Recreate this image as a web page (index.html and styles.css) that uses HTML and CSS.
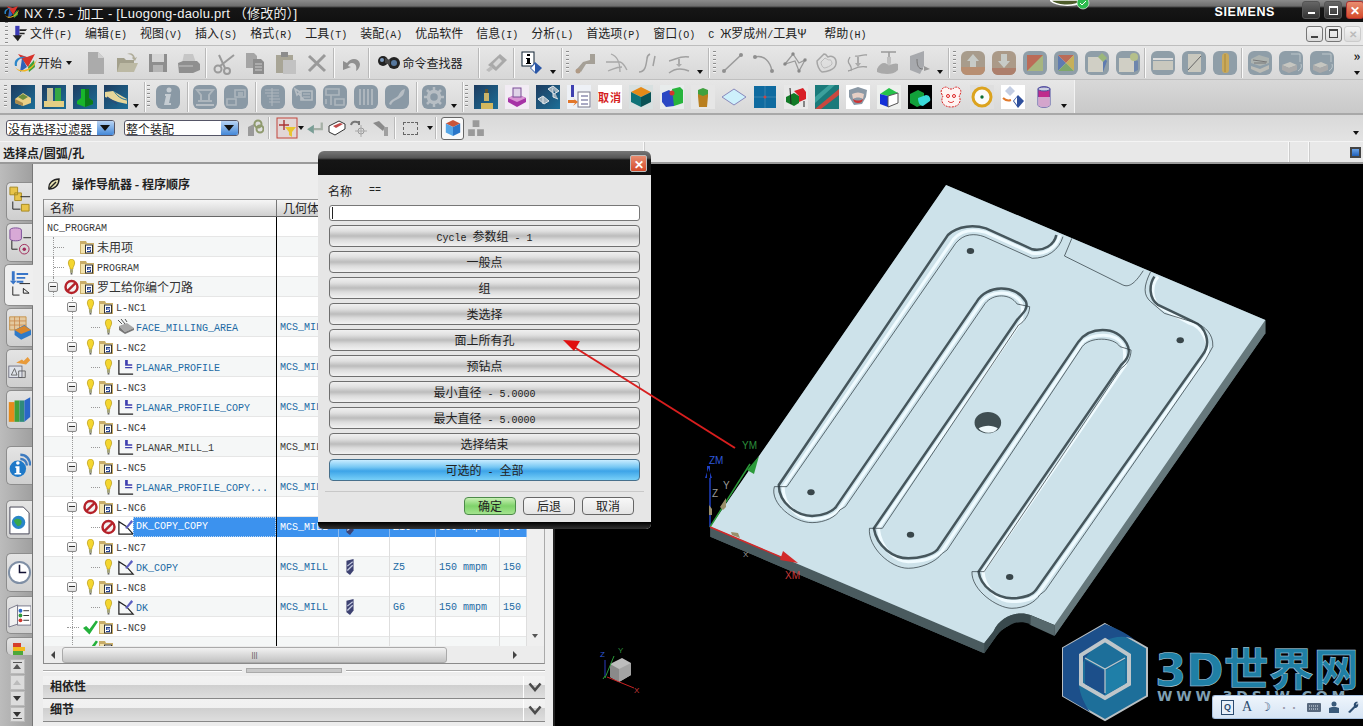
FILE: index.html
```html
<!DOCTYPE html>
<html lang="zh">
<head>
<meta charset="utf-8">
<title>NX 7.5</title>
<link rel="stylesheet" href="styles.css">
</head>
<body>
<svg class="sprite" aria-hidden="true">
<defs>
<linearGradient id="gBlue" x1="0" y1="0" x2="1" y2="1"><stop offset="0" stop-color="#1d3c60"/><stop offset="1" stop-color="#1c6f98"/></linearGradient>
</defs>
<symbol id="nx" viewBox="0 0 24 24"><path d="M4 3l9 3 8-3-7 13z" fill="#d8332a"/><path d="M8 7l5 9-7 5z" fill="#2f62b8"/><path d="M14 16l6-7 1 7-6 5z" fill="#3da23a"/><path d="M1 16c5 6 16 4 22-8-3 12-17 17-22 8z" fill="#f2b51d"/><path d="M1 15C-1 8 6 5 12 6 7 7 2 9 3 15z" fill="#2b86c8"/></symbol>
<symbol id="new" viewBox="0 0 24 24"><path d="M4 1h10l6 6v16H4z" fill="#ababab"/><path d="M14 1l6 6h-6z" fill="#d0d0d0"/></symbol>
<symbol id="open" viewBox="0 0 24 24"><path d="M2 7h7l2 2h8v12H2z" fill="#a3a08c"/><path d="M5 12h18l-4 9H2z" fill="#bcb9a4"/><path d="M12 3c4-2 7 0 8 4l2-1-2 4-3-3 1-1c-1-2-3-3-6-3z" fill="#b0ad9a"/></symbol>
<symbol id="save" viewBox="0 0 24 24"><rect x="3" y="3" width="18" height="18" fill="#8e8e8e"/><rect x="6" y="3" width="12" height="8" fill="#d5d5d5"/><rect x="7" y="14" width="10" height="7" fill="#b5b5b5"/></symbol>
<symbol id="print" viewBox="0 0 24 24"><path d="M7 3h9l3 9H5z" fill="#c6c6c6"/><path d="M1 12l5-2h14l3 3v6l-7 3H2z" fill="#8f8f8f"/><path d="M2 14h14v2H2z" fill="#aaa"/></symbol>
<symbol id="cut" viewBox="0 0 24 24"><g fill="none" stroke="#9a9a9a" stroke-width="2"><circle cx="6" cy="18" r="3.5"/><circle cx="15" cy="20" r="3"/><path d="M8 15L22 4M13 17L7 4"/></g></symbol>
<symbol id="copy" viewBox="0 0 24 24"><path d="M3 2h8l3 3v12H3z" fill="#a5a5a5"/><path d="M10 8h8l3 3v12H10z" fill="#8d8d8d"/><path d="M12 13h7M12 16h7M12 19h7" stroke="#ccc"/></symbol>
<symbol id="paste" viewBox="0 0 24 24"><rect x="2" y="4" width="17" height="18" fill="#a8a596"/><rect x="7" y="1" width="7" height="5" fill="#8c8c8c"/><rect x="9" y="9" width="13" height="14" fill="#c2c2c2"/></symbol>
<symbol id="del" viewBox="0 0 24 24"><path d="M4 5l16 15M20 4L4 20" stroke="#9a9a9a" stroke-width="3"/></symbol>
<symbol id="undo" viewBox="0 0 24 24"><path d="M7 12c4-6 12-5 13 1 0 3-2 6-4 7 1-4 0-8-4-8-2 0-3 1-4 3l3 1-8 3 0-9z" fill="#909090"/></symbol>
<symbol id="bino" viewBox="0 0 24 24"><circle cx="7" cy="10" r="5" fill="#222"/><circle cx="18" cy="12" r="6" fill="#222"/><circle cx="18" cy="12" r="3" fill="#56779d"/><circle cx="6" cy="9" r="2" fill="#7d9abc"/><path d="M9 7l5 2v5l-5-2z" fill="#444"/></symbol>
<symbol id="gem" viewBox="0 0 24 24"><path d="M3 14L15 3l7 6-11 11z" fill="#a9a9a9"/><path d="M8 13l6-6 3 3-6 6z" fill="#d8d8d8"/><path d="M1 19l5-4 2 3-4 3z" fill="#bbb"/></symbol>
<symbol id="info" viewBox="0 0 24 24"><rect x="2" y="1" width="12" height="14" fill="#fff" stroke="#123"/><path d="M7 3h3v2H7zM6 7h4v5h1v1H6v-1h1V8H6z" fill="#000"/><path d="M15 11l7 6-6 6-6-6z" fill="#2a56a6"/><path d="M15 13v8l-4-4z" fill="#fff"/></symbol>
<symbol id="c1" viewBox="0 0 24 24"><path d="M3 18l6-7 7-2V3h5v10h-9l-5 8z" fill="#a5a097"/><circle cx="4" cy="20" r="2.5" fill="#b09a85"/></symbol>
<symbol id="c2" viewBox="0 0 24 24"><path d="M1 11h14c4 1 5 5 7 8M6 3c6 2 9 7 9 18M3 20c6-2 8-4 14-4" fill="none" stroke="#a8a8a8" stroke-width="1.3"/></symbol>
<symbol id="c3" viewBox="0 0 24 24"><path d="M3 21c6 0 7-6 8-13 0-3 1-4 3-5M17 15l2-10" fill="none" stroke="#a0a0a0" stroke-width="1.5"/></symbol>
<symbol id="c4" viewBox="0 0 24 24"><path d="M2 10c6-1 12-6 20-4M2 22c6-5 13-5 20-2" fill="none" stroke="#a0a0a0" stroke-width="1.5"/><path d="M11 8v5h-2l3 3 3-3h-2V8z" fill="#aaa"/></symbol>
<symbol id="l1" viewBox="0 0 24 24"><path d="M3 20L20 4" stroke="#9a9a9a" stroke-width="1.5"/><circle cx="3" cy="20" r="2" fill="#8f8f8f"/><circle cx="20" cy="4" r="2" fill="#8f8f8f"/></symbol>
<symbol id="l2" viewBox="0 0 24 24"><path d="M3 6c9-2 15 4 17 14" fill="none" stroke="#9a9a9a" stroke-width="1.5"/><circle cx="3" cy="6" r="2" fill="#8f8f8f"/><circle cx="20" cy="20" r="2" fill="#8f8f8f"/></symbol>
<symbol id="l3" viewBox="0 0 24 24"><path d="M2 13L10 3l6 9 6-3-6 11-4-10L2 13z" fill="none" stroke="#9a9a9a" stroke-width="1.3"/><circle cx="10" cy="3" r="1.7" fill="#888"/><circle cx="2" cy="13" r="1.7" fill="#888"/><circle cx="16" cy="20" r="1.7" fill="#888"/><circle cx="22" cy="9" r="1.7" fill="#888"/></symbol>
<symbol id="l4" viewBox="0 0 24 24"><path d="M3 10l7-7c3 0 3 3 4 3 3-2 9 0 8 7-1 6-10 8-14 8-3-2-5-7-5-11z" fill="none" stroke="#a5a5a5" stroke-width="1.5"/><path d="M7 11l4-4c2 1 3 2 4 2 2-1 3 2 3 4-1 2-6 4-8 4-2-1-3-4-3-6z" fill="none" stroke="#bbb"/></symbol>
<symbol id="l5" viewBox="0 0 24 24"><path d="M5 6c-5 8 3 6 1 14M3 20c6-1 9-6 19-4M10 5c3 1 8-2 12-1" fill="none" stroke="#9f9f9f" stroke-width="1.3"/><path d="M12 6v6h-2l3 4 3-4h-2V6z" fill="#aaa"/></symbol>
<symbol id="l6" viewBox="0 0 24 24"><path d="M5 1h15M13 1v8" stroke="#999" stroke-width="1.5"/><path d="M1 18c3-6 7-7 10-5 4 2 8-2 11 0v6c-6 6-16 4-21 2z" fill="#a9a9a9"/><path d="M11 6h4v6l-2 3-2-3z" fill="#c0c0c0"/></symbol>
<symbol id="l7" viewBox="0 0 24 24"><path d="M3 5l14-5v15l-4 8-10-4z" fill="#a7a9ad"/><path d="M10 8c0 6 1 10 6 10" fill="none" stroke="#777"/><path d="M17 15l6 3-6 2z" fill="#999"/></symbol>
<symbol id="ra" viewBox="0 0 24 24"><rect width="24" height="24" rx="6" fill="#a89c8c"/><path d="M12 3l6 7h-3v6H9v-6H6z" fill="#c7cbc7"/><path d="M0 16h24v2c0 3-3 6-6 6H6c-3 0-6-3-6-6z" fill="#b88f72"/></symbol>
<symbol id="rb" viewBox="0 0 24 24"><rect width="24" height="24" rx="6" fill="#ab9a88"/><path d="M9 3h6v7h3l-6 7-6-7h3z" fill="#c7cbc7"/><path d="M0 17h24v1c0 3-3 6-6 6H6c-3 0-6-3-6-6z" fill="#ad7f6c"/></symbol>
<symbol id="rc" viewBox="0 0 24 24"><rect width="24" height="24" rx="6" fill="#8f9ea8"/><rect x="4" y="4" width="16" height="16" fill="#a7b57f"/><path d="M4 4h16L4 20z" fill="#bb6b57"/></symbol>
<symbol id="rd" viewBox="0 0 24 24"><rect width="24" height="24" rx="6" fill="#8f9ea8"/><rect x="4" y="4" width="16" height="16" fill="#ccc"/><path d="M4 4l8 8-8 8z" fill="#5f7bb0"/><path d="M4 4h16l-8 8z" fill="#bb6b57"/><path d="M20 4v16l-8-8z" fill="#c7b05a"/><path d="M4 20h16l-8-8z" fill="#7fa76c"/></symbol>
<symbol id="re" viewBox="0 0 24 24"><rect width="24" height="24" rx="6" fill="#8f9ea8"/><rect x="3" y="6" width="15" height="15" fill="#d0cfc5"/><path d="M18 6l4 4-4 11z" fill="#5f7bb0"/><path d="M13 6l4-4 5 5-4 4z" fill="#9bb77b"/></symbol>
<symbol id="rf" viewBox="0 0 24 24"><rect width="24" height="24" rx="6" fill="#8f9ea8"/><rect x="3" y="7" width="15" height="14" fill="#d0cfc5"/><path d="M18 8l4 2v9l-4 2z" fill="#6e86ad"/><circle cx="18" cy="6" r="4" fill="#b5c08a"/></symbol>
<symbol id="rg" viewBox="0 0 24 24"><rect width="24" height="24" rx="6" fill="#8f9ea8"/><path d="M2 10h20v9H2z" fill="#c9c8be"/><path d="M2 7h20v2H2z" fill="#dcdcdc"/></symbol>
<symbol id="rh" viewBox="0 0 24 24"><rect width="24" height="24" rx="6" fill="#8f9ea8"/><path d="M6 3h13v18H6z" fill="#c9c8be"/><path d="M6 19L19 5" stroke="#666"/></symbol>
<symbol id="ri" viewBox="0 0 24 24"><rect width="24" height="24" rx="6" fill="#8f9ea8"/><rect x="9" y="2" width="7" height="20" rx="3.5" fill="#c9a95b"/><path d="M12 3v18" stroke="#a88738"/></symbol>
<symbol id="rj" viewBox="0 0 24 24"><rect width="24" height="24" rx="6" fill="#8f9ea8"/><path d="M3 8l8-4 10 3v5l-9 3-9-3z" fill="#adb3b0"/><path d="M3 15l9 3 9-4v4l-9 4-9-4z" fill="#bcbcb6"/><path d="M5 9l14 2M6 12l12 0" stroke="#777"/></symbol>
<symbol id="rk" viewBox="0 0 24 24"><rect width="24" height="24" rx="6" fill="#8f9ea8"/><path d="M3 14l8-3 7 3-8 3z" fill="#c6c6c0"/><path d="M3 14v5l7 3v-5zM18 14v5l-8 3v-5z" fill="#aaa"/><path d="M12 3h9v8M19 20c3-2 4-4 3-7" fill="none" stroke="#bcc6ca"/></symbol>
<symbol id="s1" viewBox="0 0 24 24"><rect width="24" height="24" rx="6" fill="#8a99a5"/><path d="M5 16h14M8 16v-6l-4-5h16l-4 5v6" fill="none" stroke="#adb6bd" stroke-width="2"/><path d="M3 20h18" stroke="#b7bec4" stroke-width="2"/></symbol>
<symbol id="s2" viewBox="0 0 24 24"><rect width="24" height="24" rx="6" fill="#8a99a5"/><path d="M3 14h9v6H3zM11 5h10v7H11zM14 8h5M14 10h5" fill="none" stroke="#adb6bd" stroke-width="1.6"/></symbol>
<symbol id="s3" viewBox="0 0 24 24"><rect width="24" height="24" rx="6" fill="#8a99a5"/><path d="M4 5h14M4 8h14M6 11h12M8 14h11M8 17h11M11 3v18" stroke="#adb6bd" stroke-width="1.2"/></symbol>
<symbol id="s4" viewBox="0 0 24 24"><rect width="24" height="24" rx="6" fill="#8a99a5"/><path d="M3 4l5 3-3 3zM7 9l5 6M9 6h11v9H9z" fill="none" stroke="#b7bec4" stroke-width="1.6"/><path d="M11 9h7M11 12h7" stroke="#b7bec4"/></symbol>
<symbol id="s5" viewBox="0 0 24 24"><rect width="24" height="24" rx="6" fill="#8a99a5"/><path d="M3 4h13v6H3zM8 10v10M12 14h9v6h-9zM3 14v5" fill="none" stroke="#adb6bd" stroke-width="1.6"/></symbol>
<symbol id="s6" viewBox="0 0 24 24"><rect width="24" height="24" rx="6" fill="#8a99a5"/><path d="M6 4v16M10 4v16M14 4v16M18 4v16" stroke="#adb6bd" stroke-width="2"/></symbol>
<symbol id="s7" viewBox="0 0 24 24"><rect width="24" height="24" rx="6" fill="#8a99a5"/><path d="M4 19c2-5 6-5 9-8 2-3 3-6 7-7-1 4-1 6-4 8-3 3-8 3-10 8z" fill="#b7bec4"/></symbol>
<symbol id="s8" viewBox="0 0 24 24"><rect width="24" height="24" rx="6" fill="#8a99a5"/><circle cx="12" cy="12" r="5.5" fill="none" stroke="#b7bec4" stroke-width="3.5"/><path d="M12 2v4M12 18v4M2 12h4M18 12h4M5 5l3 3M16 16l3 3M19 5l-3 3M8 16l-3 3" stroke="#b7bec4" stroke-width="2.5"/></symbol>
<symbol id="inf" viewBox="0 0 24 24"><rect width="24" height="24" rx="6" fill="#8a99a5"/><circle cx="13" cy="5" r="2.5" fill="#c5ccd2"/><path d="M9 9h6l-2 9h2v2H8l2-9H9z" fill="#c5ccd2"/></symbol>
<symbol id="t1" viewBox="0 0 24 24"><rect width="24" height="24" fill="url(#gBlue)"/><path d="M4 14l8-6 8 5v5l-8 3-8-3z" fill="#e9cf86"/><path d="M7 12l5-3 5 3-5 3z" fill="#6b8e3d"/><path d="M4 14l8 4v3l-8-3z" fill="#a98b4d"/></symbol>
<symbol id="t2" viewBox="0 0 24 24"><rect width="24" height="24" fill="url(#gBlue)"/><rect x="5" y="3" width="6" height="13" fill="#c8c29c"/><rect x="13" y="3" width="6" height="13" fill="#36a843"/><path d="M2 16h20v6H2z" fill="#e4cf84"/></symbol>
<symbol id="t3" viewBox="0 0 24 24"><rect width="24" height="24" fill="url(#gBlue)"/><path d="M8 4h8v9l4 3v3l-8 3-8-3v-3l4-3z" fill="#18b52b"/><path d="M12 4h4v9l4 3v3l-8 3z" fill="#0a7a18"/></symbol>
<symbol id="t4" viewBox="0 0 24 24"><rect width="24" height="24" fill="url(#gBlue)"/><path d="M1 7l8-1 14 8v5l-9-2-13-5z" fill="#e6d69a"/><path d="M3 12l10 7" stroke="#2b4d77" stroke-width="1.5"/><path d="M10 6c3 5 7 8 13 9" stroke="#1c6f98" fill="none"/></symbol>
<symbol id="t5" viewBox="0 0 24 24"><rect width="24" height="24" fill="url(#gBlue)"/><path d="M10 8h5v8h-5z" fill="#c9b46a"/><path d="M7 18h12v6H7z" fill="#d3b85e"/><path d="M11 4h3v4h-3z" fill="#5d5230"/></symbol>
<symbol id="t6" viewBox="0 0 24 24"><rect width="24" height="24" fill="#f2ecf4"/><path d="M3 13l9-4 9 4v4l-9 5-9-5z" fill="#a632a6"/><path d="M12 9l9 4-9 4-9-4z" fill="#d995d4"/><rect x="8" y="3" width="8" height="9" fill="#dfd3e8" stroke="#7a4d96"/></symbol>
<symbol id="t7" viewBox="0 0 24 24"><rect width="24" height="24" fill="url(#gBlue)"/><path d="M12 4l5-3 6 5-5 3zM2 14l5-3 6 5-5 3zM17 3v9l5 2M7 12v7" fill="#9fb0bc" stroke="#dfe6ea"/></symbol>
<symbol id="t8" viewBox="0 0 24 24"><rect width="24" height="24" fill="#eef1f6"/><path d="M4 0h3v12H4z" fill="#3e3fb0"/><rect x="11" y="7" width="12" height="15" fill="#fff" stroke="#778"/><path d="M14 11h7M14 15h7M14 19h7" stroke="#558"/><path d="M1 15h7l-2-2 5 4-5 4 2-3H1z" fill="#e2762a"/></symbol>
<symbol id="t10" viewBox="0 0 24 24"><rect width="24" height="24" fill="#d8e0e0"/><path d="M2 7l10-5 10 5-10 5z" fill="#e58a18"/><path d="M2 7l10 5v10L2 17z" fill="#0f7378"/><path d="M22 7l-10 5v10l10-5z" fill="#0a5255"/></symbol>
<symbol id="t11" viewBox="0 0 24 24"><rect width="24" height="24" fill="#e8ecec"/><path d="M2 8l7-3 5 4v12l-8 1-4-5z" fill="#2a48c4"/><path d="M12 4l8-2 3 3v13l-9 3z" fill="#27b43c"/><circle cx="12" cy="8" r="2.5" fill="#d3352c"/></symbol>
<symbol id="t12" viewBox="0 0 24 24"><rect width="24" height="24" fill="#e6e6e6"/><path d="M7 7h10v4l-1 11H8L7 11z" fill="#b97f1f"/><path d="M7 5l5-2 5 2v4l-5 2-5-2z" fill="#3fa13f"/></symbol>
<symbol id="t13" viewBox="0 0 24 24"><path d="M12 4l12 8-12 8L0 12z" fill="#cdf0fb" stroke="#88b"/></symbol>
<symbol id="t14" viewBox="0 0 24 24"><rect x="1" y="1" width="22" height="22" fill="#0f6ba0"/><path d="M12 1v22M1 12h22" stroke="#3a84ae"/><circle cx="12" cy="12" r="1.5" fill="#c44"/></symbol>
<symbol id="t15" viewBox="0 0 24 24"><rect width="24" height="24" fill="#e8e8e8"/><path d="M2 12l8-4 5 3v7l-5 3-8-4z" fill="#127a27"/><path d="M10 6l9-3 3 4v7l-7 3v-6z" fill="#d81f26"/><path d="M6 3l1 16M20 16v6" stroke="#222"/></symbol>
<symbol id="t16" viewBox="0 0 24 24"><rect width="24" height="24" fill="#1a7a7a"/><path d="M0 24L24 4v6L6 24z" fill="#c9483f"/><path d="M0 12L14 0h6L0 18z" fill="#3ba09c"/></symbol>
<symbol id="t17" viewBox="0 0 24 24"><rect width="24" height="24" fill="#fff"/><path d="M3 5l9-3 9 3-1 7-4 7-8 1-5-8z" fill="#8a98a5"/><path d="M6 9c4-2 8-2 12 0l-1 5c-3-2-7-2-10 0z" fill="#e6cfc5"/><path d="M7 14c3 2 7 2 10 0-1 3-2 4-5 4s-4-1-5-4z" fill="#c33"/></symbol>
<symbol id="t18" viewBox="0 0 24 24"><rect width="24" height="24" fill="#eef0ee"/><path d="M3 9l9-6 9 5-10 3z" fill="#24c24a"/><path d="M3 9l8 2v11l-8-3z" fill="#1330d8"/><path d="M11 11l10-3v10l-10 4z" fill="#fff" stroke="#555"/></symbol>
<symbol id="t19" viewBox="0 0 24 24"><rect width="24" height="24" fill="#000"/><path d="M2 9l8-4 6 3v11l-7 3-7-4z" fill="#12a03a"/><path d="M10 13l8-3c3 0 5 3 4 6l-7 5c-3 0-5-3-5-8z" fill="#3ad9d9"/></symbol>
<symbol id="t20" viewBox="0 0 24 24"><path d="M3 4c3-3 6-2 7 0h4c1-2 4-3 7 0 2 3 0 6-1 7 3 5 0 11-8 11S1 16 4 11C3 10 1 7 3 4z" fill="#fff4f2" stroke="#d92a2a" stroke-dasharray="2 1"/><circle cx="9" cy="11" r="1.5" fill="none" stroke="#d22"/><circle cx="15" cy="11" r="1.5" fill="none" stroke="#d22"/><path d="M9 16c2 2 4 2 6 0" fill="none" stroke="#d22"/></symbol>
<symbol id="t21" viewBox="0 0 24 24"><rect width="24" height="24" fill="#dfdfdf"/><circle cx="12" cy="12" r="9" fill="#fafafa" stroke="#dca31e" stroke-width="3"/><circle cx="12" cy="12" r="1.7" fill="#0c6c32"/></symbol>
<symbol id="t22" viewBox="0 0 24 24"><rect width="24" height="24" fill="#fff"/><path d="M9 1l5 5-5 5-5-5z" fill="#c3cde2"/><path d="M17 10l6 6-6 7-5-7z" fill="#2e4f9c"/><path d="M16 12v8l-3-4z" fill="#fff"/><path d="M2 13c2 2 5 3 8 2" stroke="#e27a2b" stroke-width="2" fill="none"/></symbol>
<symbol id="t23" viewBox="0 0 24 24"><path d="M6 4c0-3 12-3 12 0v16c0 3-12 3-12 0z" fill="#c02c8c" stroke="#4d4da0"/><ellipse cx="12" cy="4" rx="6" ry="2" fill="#cdd0e0" stroke="#4d4da0"/><path d="M6 12h12v8c0 3-12 3-12 0z" fill="#d8c4dc" opacity=".8"/></symbol>
<symbol id="bulb" viewBox="0 0 12 18"><path d="M2.500 4.500c0-6 7-6 7 0 0 3-2 4-2 7h-3c0-3-2-4-2-7z" fill="#f4d630" stroke="#b99a10" stroke-width=".8"/><rect x="4.300" y="11.500" width="3.400" height="4" fill="#a5a57a"/><path d="M5 15.500h2v2H5z" fill="#666"/></symbol>
<symbol id="stop" viewBox="0 0 16 16"><circle cx="8" cy="8" r="6.4" fill="#f2f2f2" stroke="#b5222a" stroke-width="2.6"/><path d="M3.5 12.5l9-9" stroke="#b5222a" stroke-width="2.6"/></symbol>
<symbol id="check" viewBox="0 0 14 14"><path d="M0 8l3-2 3 3 6-8 2 1-8 12z" fill="#24b13b"/></symbol>
<symbol id="folder" viewBox="0 0 14 14"><path d="M0 1h6l1 2h7v11H0z" fill="#c9ad68"/><path d="M1 4h12v9H1z" fill="#f3e3ae"/><rect x="5.500" y="5" width="7" height="8" fill="#fff" stroke="#333"/><path d="M7 7h4v1.500H7.800v1H11V12H7v-1h3V10H7z" fill="#1f3d8f"/></symbol>
<symbol id="iface" viewBox="0 0 18 16"><path d="M2 7l6 6 9-4-7-5z" fill="#a8a8a8"/><path d="M1 1l4 4M4 0l4 5M8 0l2 3" stroke="#555"/><path d="M2 7v4l6 4 9-4V9l-9 4z" fill="#777"/></symbol>
<symbol id="iplan" viewBox="0 0 18 18"><path d="M1 1v16h16" fill="none" stroke="#222" stroke-width="1.4"/><path d="M8 1h3v5h5v1.500h-8zM8 9h8v1.500H8z" fill="#3f3fb0"/></symbol>
<symbol id="idk" viewBox="0 0 18 18"><path d="M1 3v14h16L9 8z" fill="none" stroke="#222" stroke-width="1.4"/><path d="M8 10L15 1l2 2-7 8z" fill="#5c5fc0"/></symbol>
<symbol id="tool" viewBox="0 0 10 18"><path d="M1 2l8-2v13l-4 5-4-3z" fill="#3d4272"/><path d="M2 8l6-5M2 13l6-6" stroke="#c5cbe0" stroke-width="1.4"/></symbol>
<symbol id="tab1" viewBox="0 0 24 34"><path d="M2 2h8v8H2zM7 8h7v8H7z" fill="#e8c44a" stroke="#a78a20"/><path d="M5 17v8h8M13 12h10" fill="none" stroke="#222"/><path d="M14 20h8v7h-8z" fill="#e8c44a" stroke="#a78a20"/></symbol>
<symbol id="tab2" viewBox="0 0 24 34"><path d="M2 4c0-3 12-3 12 0v9c0 3-12 3-12 0z" fill="#d8a9d6" stroke="#7a4d96"/><path d="M4 15v9h6M16 12h8" fill="none" stroke="#222"/><circle cx="17" cy="24" r="5" fill="none" stroke="#a02a5a"/><circle cx="17" cy="24" r="1.800" fill="#a02a5a"/></symbol>
<symbol id="tab3" viewBox="0 0 24 34"><path d="M4 2h3v10H4zM9 4h12v2H9zM9 8h9v2H9zM9 12h7v2H9z" fill="#3875c8"/><path d="M2 12h7l-3.500 4z" fill="#3875c8"/><path d="M5 18v9h7M12 15h11M16 25v-5l6 5z" fill="none" stroke="#222"/></symbol>
<symbol id="tab4" viewBox="0 0 28 34"><path d="M2 4h20v16H2z" fill="#e4c9a0" stroke="#c28a3a"/><path d="M2 9h20M2 14h20M8 4v16M14 4v16" stroke="#c8884a"/><path d="M8 20l12-6 8 6v6l-12 6-8-6z" fill="#2f7ac8"/><path d="M8 20l12-5 8 5-12 5z" fill="#d9872d"/></symbol>
<symbol id="tab5" viewBox="0 0 28 34"><rect x="1" y="14" width="16" height="14" fill="#dfe3ea" stroke="#667"/><path d="M4 25l4-8 3 8zM13 20h8v8h-8z" fill="none" stroke="#555"/><path d="M10 10l7-4 2 2 5-5 3 4-5 5z" fill="#e89a3a"/></symbol>
<symbol id="tab6" viewBox="0 0 28 34"><rect x="1" y="8" width="7" height="24" fill="#e68a1a"/><rect x="8" y="6" width="6" height="26" fill="#3ea03a"/><rect x="14" y="6" width="6" height="26" fill="#2f8a7a"/><path d="M20 6l7-4v24l-7 6z" fill="#2a66c8"/></symbol>
<symbol id="tab7" viewBox="0 0 28 34"><circle cx="12" cy="21" r="10" fill="#1f79c8"/><circle cx="12" cy="14" r="2.200" fill="#fff"/><path d="M9 18h5v8h2v2H8v-2h2v-6H9z" fill="#fff"/><path d="M15 4c7 0 12 5 12 13M15 9c4 0 8 3 8 8" fill="none" stroke="#3e7bc0" stroke-width="3"/></symbol>
<symbol id="tab8" viewBox="0 0 24 34"><path d="M2 4h14l6 6v22H2z" fill="#fff" stroke="#445"/><circle cx="11" cy="20" r="7" fill="#2a86c8"/><path d="M6 18c3-3 6-2 8 0 1 3-1 6-4 6-1-2-3-3-4-6z" fill="#39a84a"/></symbol>
<symbol id="tab9" viewBox="0 0 24 26"><circle cx="12" cy="13" r="11" fill="#fff" stroke="#7f8fa5" stroke-width="2"/><path d="M12 5v8h7" fill="none" stroke="#113" stroke-width="1.600"/></symbol>
<symbol id="tab10" viewBox="0 0 24 24"><path d="M1 5l9-4v20l-9 3z" fill="#f2f2f2" stroke="#778"/><rect x="10" y="2" width="14" height="20" fill="#fff" stroke="#778"/><circle cx="13" cy="7" r="2" fill="#2f69c8"/><circle cx="13" cy="12" r="2" fill="#2d9a3a"/><circle cx="13" cy="17" r="2" fill="#d0352c"/><path d="M16 7h6M16 12h6M16 17h6" stroke="#333"/></symbol>
<symbol id="tab11" viewBox="0 0 14 12"><path d="M0 0h8v4H0z" fill="#d53e2a"/><path d="M0 4h12v4H0z" fill="#f2b91f"/><path d="M0 8h10v4H0z" fill="#4da83a"/></symbol>
<symbol id="navi" viewBox="0 0 12 12"><path d="M1 11C0 5 5 1 11 1c0 6-4 10-10 10z" fill="#e9e2b0" stroke="#222" stroke-width="1.400"/><path d="M1 11L8 4" stroke="#222" stroke-width="1.400"/></symbol>
<symbol id="funnel" viewBox="0 0 22 22"><rect x="1" y="1" width="20" height="20" fill="#e2d6d6" stroke="#c2453a"/><path d="M3 8h10M8 3v10" stroke="#a33" stroke-width="1.400"/><path d="M9 10h11l-4 5v5l-3-2v-3z" fill="#e8c530"/></symbol>
<symbol id="retn" viewBox="0 0 16 16"><path d="M14 3v6H7" fill="none" stroke="#a6b0a6" stroke-width="2"/><path d="M7 5v8L1 9z" fill="#7a9e96"/></symbol>
<symbol id="box" viewBox="0 0 18 16"><path d="M1 6l10-5 6 3v5L7 15l-6-3z" fill="#fff" stroke="#333"/><path d="M5 6l7-3 3 1-7 4z" fill="#c04a4a"/></symbol>
<symbol id="pcs" viewBox="0 0 18 18"><path d="M1 6c1-4 5-4 8-2M9 2v4" fill="none" stroke="#777" stroke-width="2"/><circle cx="11" cy="12" r="3" fill="none" stroke="#999"/><path d="M11 6v12M5 12h12" stroke="#aaa"/></symbol>
<symbol id="pcs2" viewBox="0 0 18 18"><path d="M1 4l6-2 6 6-2 4z" fill="#8a8a8a"/><rect x="12" y="8" width="4" height="9" fill="#a0a0a0"/></symbol>
<symbol id="chain" viewBox="0 0 18 18"><path d="M2 8l6-3v12H2z" fill="#9a9a9a"/><circle cx="12" cy="5" r="3.500" fill="none" stroke="#8f9a6e" stroke-width="2"/><circle cx="14" cy="10" r="3.500" fill="none" stroke="#8f9a6e" stroke-width="2"/></symbol>
<symbol id="cube" viewBox="0 0 20 20"><path d="M2 5l8-4 8 4-8 4z" fill="#c8553a"/><path d="M2 5l8 4v10l-8-4z" fill="#56a6e6"/><path d="M18 5l-8 4v10l8-4z" fill="#2a76c8"/></symbol>
<symbol id="cube2" viewBox="0 0 16 16"><path d="M5 1h6v6H5zM1 9h6v6H1zM9 9h6v6H9z" fill="#9a9a9a"/></symbol>
<symbol id="chev" viewBox="0 0 14 10"><path d="M1.500 1.500L7 8l5.500-6.500" fill="none" stroke="#4c4c4c" stroke-width="2.600"/></symbol>
</svg>

<div class="app">
  <header class="title">
    <svg class="titleicon"><use href="#nx"/></svg>
    <span class="titletext">NX 7.5 - 加工 - [Luogong-daolu.prt （修改的）]</span>
    <span class="brand">SIEMENS</span>
    <span class="wbtns">
      <button class="wb"><span class="wmin"></span></button>
      <button class="wb"><span class="wmax"></span></button>
      <button class="wb wclose">✕</button>
    </span>
  </header>

  <nav class="menu">
    <i class="grip menugrip"></i>
    <svg class="menulogo" viewBox="0 0 20 20"><path d="M5 1h5v12H5z" fill="#3b3bb5"/><path d="M2 12h11l-5 7z" fill="#222"/><path d="M10 5h9l-2 2h-7zM10 9h6v2h-6z" fill="#222"/></svg>
    <span class="mi first">文件<span class="k">(F)</span></span><span class="mi">编辑<span class="k">(E)</span></span><span class="mi">视图<span class="k">(V)</span></span><span class="mi">插入<span class="k">(S)</span></span><span class="mi">格式<span class="k">(R)</span></span><span class="mi">工具<span class="k">(T)</span></span><span class="mi">装配<span class="k">(A)</span></span><span class="mi">优品软件</span><span class="mi">信息<span class="k">(I)</span></span><span class="mi">分析<span class="k">(L)</span></span><span class="mi">首选项<span class="k">(P)</span></span><span class="mi">窗口<span class="k">(O)</span></span><span class="mi cu"><span class="k">C </span>Ж罗成州<span class="k">/</span>工具Ψ</span><span class="mi">帮助<span class="k">(H)</span></span>
    <span class="innerbtns"><button class="ib"><span class="imin"></span></button><button class="ib"><span class="imax"></span></button><button class="ib dim">✕</button></span>
  </nav>

  <div class="tb tb1">
    <i class="grip"></i>
    <span class="startbtn"><svg class="starticon"><use href="#nx"/></svg><span>开始</span><i class="caret"></i></span>
    <svg class="i"><use href="#new"/></svg><svg class="i"><use href="#open"/></svg><svg class="i"><use href="#save"/></svg><svg class="i"><use href="#print"/></svg><i class="sep"></i>
    <svg class="i"><use href="#cut"/></svg><svg class="i"><use href="#copy"/></svg><svg class="i"><use href="#paste"/></svg><svg class="i"><use href="#del"/></svg><i class="sep"></i>
    <svg class="i"><use href="#undo"/></svg><i class="sep"></i>
    <span class="finder"><svg class="i"><use href="#bino"/></svg><span>命令查找器</span></span><i class="sep"></i>
    <svg class="i"><use href="#gem"/></svg><i class="sep"></i>
    <svg class="i"><use href="#info"/></svg><i class="dd"></i><i class="sep"></i><i class="grip"></i>
    <svg class="i"><use href="#c1"/></svg><svg class="i"><use href="#c2"/></svg><svg class="i"><use href="#c3"/></svg><svg class="i"><use href="#c4"/></svg><i class="dd"></i><i class="sep"></i><i class="grip"></i>
    <svg class="i"><use href="#l1"/></svg><svg class="i"><use href="#l2"/></svg><svg class="i"><use href="#l3"/></svg><svg class="i"><use href="#l4"/></svg><svg class="i"><use href="#l5"/></svg><svg class="i"><use href="#l6"/></svg><svg class="i"><use href="#l7"/></svg><i class="dd"></i><i class="sep"></i><i class="grip"></i>
    <svg class="i"><use href="#ra"/></svg><svg class="i"><use href="#rb"/></svg><svg class="i"><use href="#rc"/></svg><svg class="i"><use href="#rd"/></svg><svg class="i"><use href="#re"/></svg><svg class="i"><use href="#rf"/></svg><i class="sep"></i>
    <svg class="i"><use href="#rg"/></svg><svg class="i"><use href="#rh"/></svg><svg class="i"><use href="#ri"/></svg><i class="sep"></i>
    <svg class="i"><use href="#rj"/></svg><svg class="i"><use href="#rk"/></svg><svg class="i"><use href="#rk"/></svg>
    <span class="tbmore"><b>»</b><i class="caret"></i></span>
  </div>

  <div class="tb tb2">
    <span class="tb2main">
    <i class="grip gfirst"></i>
    <svg class="i"><use href="#t1"/></svg><svg class="i"><use href="#t2"/></svg><svg class="i"><use href="#t3"/></svg><svg class="i"><use href="#t4"/></svg><i class="dd"></i><i class="sep"></i><i class="grip"></i>
    <svg class="i"><use href="#inf"/></svg><i class="sep"></i>
    <svg class="i"><use href="#s1"/></svg><svg class="i"><use href="#s2"/></svg><i class="sep"></i>
    <svg class="i"><use href="#s3"/></svg><svg class="i"><use href="#s4"/></svg><svg class="i"><use href="#s5"/></svg><svg class="i"><use href="#s6"/></svg><svg class="i"><use href="#s7"/></svg><i class="sep"></i>
    <svg class="i"><use href="#s8"/></svg><i class="dd"></i><i class="sep"></i><i class="grip"></i>
    <svg class="i"><use href="#t5"/></svg><svg class="i"><use href="#t6"/></svg><svg class="i"><use href="#t7"/></svg><svg class="i"><use href="#t8"/></svg>
    <svg class="i" viewBox="0 0 24 24"><rect width="24" height="24" fill="#fff"/><text x="0" y="17" class="redt">取</text><text x="12" y="17" class="redt">消</text></svg>
    <svg class="i"><use href="#t10"/></svg><svg class="i"><use href="#t11"/></svg><svg class="i"><use href="#t12"/></svg><svg class="i"><use href="#t13"/></svg><svg class="i"><use href="#t14"/></svg><svg class="i"><use href="#t15"/></svg><svg class="i"><use href="#t16"/></svg><svg class="i"><use href="#t17"/></svg><svg class="i"><use href="#t18"/></svg><svg class="i"><use href="#t19"/></svg><svg class="i"><use href="#t20"/></svg><svg class="i"><use href="#t21"/></svg><svg class="i"><use href="#t22"/></svg><svg class="i"><use href="#t23"/></svg><i class="dd"></i>
    </span>
  </div>

  <div class="selbar">
    <span class="combo c1"><span class="ctext">没有选择过滤器</span><i class="carrow"></i></span>
    <span class="combo c2"><span class="ctext">整个装配</span><i class="carrow"></i></span>
    <svg class="si chain"><use href="#chain"/></svg><i class="sep"></i>
    <svg class="si funnel"><use href="#funnel"/></svg><i class="caret"></i>
    <svg class="si"><use href="#retn"/></svg>
    <svg class="si"><use href="#box"/></svg>
    <svg class="si"><use href="#pcs"/></svg>
    <svg class="si"><use href="#pcs2"/></svg><i class="sep"></i>
    <span class="dashrect"></span><i class="caret"></i><i class="sep"></i>
    <span class="cubebtn"><svg class="si"><use href="#cube"/></svg></span>
    <svg class="si"><use href="#cube2"/></svg>
    <i class="caret selcaret"></i>
  </div>

  <div class="cue">
    <span class="cuetext">选择点/圆弧/孔</span>
    <span class="cuecell c-a"></span><span class="cuecell c-b"></span><span class="cuecell c-c"></span>
    <span class="cueicon"></span>
  </div>

  <main class="main">
    <aside class="tabs">
      <div class="tab"><svg><use href="#tab1"/></svg></div>
      <div class="tab"><svg><use href="#tab2"/></svg></div>
      <div class="tab active"><svg><use href="#tab3"/></svg></div>
      <div class="tab"><svg><use href="#tab4"/></svg></div>
      <div class="tab"><svg><use href="#tab5"/></svg></div>
      <div class="tab"><svg><use href="#tab6"/></svg></div>
      <div class="tab gap"><svg><use href="#tab7"/></svg></div>
      <div class="tab gap2"><svg><use href="#tab8"/></svg></div>
      <div class="tab gap3"><svg><use href="#tab9"/></svg></div>
      <div class="tab t10"><svg><use href="#tab10"/></svg></div>
      <div class="tab t11"><svg><use href="#tab11"/></svg></div>
      <div class="tabscroll"><span class="tu bar"></span><span class="tu dimt"></span><span class="td"></span><span class="td bar"></span></div>
    </aside>

    <section class="panel">
      <div class="panelhead"><svg class="navi"><use href="#navi"/></svg><span>操作导航器 - 程序顺序</span></div>
      <div class="tree">
        <div class="thead"><span class="th th1">名称</span><span class="th">几何体</span></div>
        <div class="tbody">
          <div class="tlines">
            <div class="row"><div class="nm n0 nt"><span class="mono dark">NC_PROGRAM</span></div><div class="g"></div><div class="g"></div><div class="g"></div><div class="g"></div><div class="g"></div></div>
            <div class="row alt"><div class="nm n0"><i class="stub"></i><span class="st"></span><svg class="fo"><use href="#folder"/></svg><span class="cjk">未用项</span></div><div class="g"></div><div class="g"></div><div class="g"></div><div class="g"></div><div class="g"></div></div>
            <div class="row"><div class="nm n0"><i class="stub"></i><svg class="st"><use href="#bulb"/></svg><svg class="fo"><use href="#folder"/></svg><span class="mono dark">PROGRAM</span></div><div class="g"></div><div class="g"></div><div class="g"></div><div class="g"></div><div class="g"></div></div>
            <div class="row alt"><div class="nm n0"><i class="exp"></i><svg class="st"><use href="#stop"/></svg><svg class="fo"><use href="#folder"/></svg><span class="cjk">罗工给你编个刀路</span></div><div class="g"></div><div class="g"></div><div class="g"></div><div class="g"></div><div class="g"></div></div>

            <div class="row"><div class="nm n1"><i class="exp"></i><svg class="st"><use href="#bulb"/></svg><svg class="fo"><use href="#folder"/></svg><span class="mono dark">L-NC1</span></div><div class="g"></div><div class="g"></div><div class="g"></div><div class="g"></div><div class="g"></div></div>
            <div class="row alt"><div class="nm n2"><i class="stub s2"></i><svg class="st"><use href="#bulb"/></svg><svg class="op"><use href="#iface"/></svg><span class="mono">FACE_MILLING_AREA</span></div><div class="g mono">MCS_MILL</div><div class="g"></div><div class="g"></div><div class="g"></div><div class="g"></div></div>
            <div class="row"><div class="nm n1"><i class="exp"></i><svg class="st"><use href="#bulb"/></svg><svg class="fo"><use href="#folder"/></svg><span class="mono dark">L-NC2</span></div><div class="g"></div><div class="g"></div><div class="g"></div><div class="g"></div><div class="g"></div></div>
            <div class="row alt"><div class="nm n2"><i class="stub s2"></i><svg class="st"><use href="#bulb"/></svg><svg class="op"><use href="#iplan"/></svg><span class="mono">PLANAR_PROFILE</span></div><div class="g mono">MCS_MILL</div><div class="g"></div><div class="g"></div><div class="g"></div><div class="g"></div></div>
            <div class="row"><div class="nm n1"><i class="exp"></i><svg class="st"><use href="#bulb"/></svg><svg class="fo"><use href="#folder"/></svg><span class="mono dark">L-NC3</span></div><div class="g"></div><div class="g"></div><div class="g"></div><div class="g"></div><div class="g"></div></div>
            <div class="row alt"><div class="nm n2"><i class="stub s2"></i><svg class="st"><use href="#bulb"/></svg><svg class="op"><use href="#iplan"/></svg><span class="mono">PLANAR_PROFILE_COPY</span></div><div class="g mono">MCS_MILL</div><div class="g"></div><div class="g"></div><div class="g"></div><div class="g"></div></div>
            <div class="row"><div class="nm n1"><i class="exp"></i><svg class="st"><use href="#bulb"/></svg><svg class="fo"><use href="#folder"/></svg><span class="mono dark">L-NC4</span></div><div class="g"></div><div class="g"></div><div class="g"></div><div class="g"></div><div class="g"></div></div>
            <div class="row alt"><div class="nm n2"><i class="stub s2"></i><svg class="st"><use href="#bulb"/></svg><svg class="op"><use href="#iplan"/></svg><span class="mono dark">PLANAR_MILL_1</span></div><div class="g mono dark">MCS_MILL</div><div class="g"></div><div class="g"></div><div class="g"></div><div class="g"></div></div>
            <div class="row"><div class="nm n1"><i class="exp"></i><svg class="st"><use href="#bulb"/></svg><svg class="fo"><use href="#folder"/></svg><span class="mono dark">L-NC5</span></div><div class="g"></div><div class="g"></div><div class="g"></div><div class="g"></div><div class="g"></div></div>
            <div class="row alt"><div class="nm n2"><i class="stub s2"></i><svg class="st"><use href="#bulb"/></svg><svg class="op"><use href="#iplan"/></svg><span class="mono">PLANAR_PROFILE_COPY...</span></div><div class="g mono">MCS_MILL</div><div class="g"></div><div class="g"></div><div class="g"></div><div class="g"></div></div>
            <div class="row"><div class="nm n1"><i class="exp"></i><svg class="st"><use href="#stop"/></svg><svg class="fo"><use href="#folder"/></svg><span class="mono dark">L-NC6</span></div><div class="g"></div><div class="g"></div><div class="g"></div><div class="g"></div><div class="g"></div></div>
            <div class="row alt sel"><div class="nm n2"><i class="stub s2"></i><svg class="st"><use href="#stop"/></svg><svg class="op"><use href="#idk"/></svg><span class="mono seltext">DK_COPY_COPY</span></div><div class="g mono">MCS_MILL</div><div class="g"><svg class="tool"><use href="#tool"/></svg></div><div class="g mono">Z10</div><div class="g mono">150 mmpm</div><div class="g mono">150</div></div>
            <div class="row"><div class="nm n1"><i class="exp"></i><svg class="st"><use href="#bulb"/></svg><svg class="fo"><use href="#folder"/></svg><span class="mono dark">L-NC7</span></div><div class="g"></div><div class="g"></div><div class="g"></div><div class="g"></div><div class="g"></div></div>
            <div class="row alt"><div class="nm n2"><i class="stub s2"></i><svg class="st"><use href="#bulb"/></svg><svg class="op"><use href="#idk"/></svg><span class="mono">DK_COPY</span></div><div class="g mono">MCS_MILL</div><div class="g"><svg class="tool"><use href="#tool"/></svg></div><div class="g mono">Z5</div><div class="g mono">150 mmpm</div><div class="g mono">150</div></div>
            <div class="row"><div class="nm n1"><i class="exp"></i><svg class="st"><use href="#bulb"/></svg><svg class="fo"><use href="#folder"/></svg><span class="mono dark">L-NC8</span></div><div class="g"></div><div class="g"></div><div class="g"></div><div class="g"></div><div class="g"></div></div>
            <div class="row alt"><div class="nm n2"><i class="stub s2"></i><svg class="st"><use href="#bulb"/></svg><svg class="op"><use href="#idk"/></svg><span class="mono">DK</span></div><div class="g mono">MCS_MILL</div><div class="g"><svg class="tool"><use href="#tool"/></svg></div><div class="g mono">G6</div><div class="g mono">150 mmpm</div><div class="g mono">150</div></div>
            <div class="row"><div class="nm n1"><i class="stub s1"></i><svg class="st"><use href="#check"/></svg><svg class="fo"><use href="#folder"/></svg><span class="mono dark">L-NC9</span></div><div class="g"></div><div class="g"></div><div class="g"></div><div class="g"></div><div class="g"></div></div>
            <div class="row alt"><div class="nm n1"><i class="stub s1"></i><svg class="st"><use href="#check"/></svg><svg class="fo"><use href="#folder"/></svg></div><div class="g"></div><div class="g"></div><div class="g"></div><div class="g"></div><div class="g"></div></div>
          </div>
          <div class="vscroll"><i class="vdown"></i></div>
        </div>
        <div class="hscroll"><i class="hl"></i><div class="thumb"><span>|||</span></div><i class="hr"></i></div>
      </div>
      <div class="sash"><i></i><b></b><i></i></div>
      <div class="acc"><span>相依性</span><em><svg class="chev"><use href="#chev"/></svg></em></div>
      <div class="acc"><span>细节</span><em><svg class="chev"><use href="#chev"/></svg></em></div>
    </section>

    <section class="view">
      <svg class="scene" viewBox="555 164 808 562">
        <g transform="translate(690 170) scale(.37 .3333)">
          <path d="M692,45 L1555,450 L1555,490 L985,1398 L985,1365 L920,1335 L920,1365 C890,1352 850,1365 830,1395 L795,1450 L55,1100 L55,1070 Z" fill="#56686c"/>
          <path d="M55,1070 L795,1420 L795,1450 L55,1100 Z" fill="#4a5b5f"/>
          <path d="M1555,450 L1555,490 L985,1398 L985,1365 Z" fill="#66787c"/>
          <path d="M692,45 L1555,450 L985,1365 L920,1335 C890,1322 840,1335 820,1385 L795,1420 L55,1070 Z" fill="#cde2ea"/>
          <path d="M820,1385 C840,1335 890,1322 920,1335 L920,1365 C890,1352 850,1365 830,1395 L795,1450 L795,1420 Z" fill="#3a4a4e"/>
          <path d="M850,1380 C870,1355 895,1352 918,1362 L915,1380 Z" fill="#000"/>
          <path d="M920,1335 L985,1365 L985,1398 L920,1365 Z" fill="#56686c"/>
          <path class="wh" d="M1000,195 C990,235 960,255 925,250 L800,187 C770,178 735,178 712,208 L252,950 C250,1000 290,1048 330,1048 C365,1048 395,1035 407,1012 L787,398 C810,360 872,358 895,398 C903,420 895,440 897,450 L509,1075 C515,1135 555,1175 590,1175 C625,1175 660,1165 680,1145 L1062,515 C1090,490 1150,485 1170,525 C1180,550 1170,570 1177,585 L792,1205 C795,1255 835,1295 870,1295 C905,1295 935,1285 947,1262 L1397,555 C1405,520 1385,470 1350,460 L1275,415 C1245,395 1245,345 1265,320"/>
          <path class="dk" d="M990,195 C985,225 955,245 925,238 L800,175 C770,165 725,165 697,195 L240,945 C240,1000 290,1038 330,1038 C360,1038 385,1025 395,1010 L775,395 C800,345 880,340 908,395 C915,415 900,430 885,448 L497,1075 C505,1130 550,1165 590,1165 C620,1165 655,1155 668,1140 L1050,515 C1080,470 1150,465 1180,520 C1195,550 1180,570 1165,585 L780,1205 C785,1250 830,1285 870,1285 C900,1285 925,1275 935,1260 L1385,555 C1410,520 1395,470 1360,455 L1265,405 C1240,385 1240,345 1255,320"/>
          <path class="tl" d="M1008,200 C998,240 965,265 925,265 L795,200 C770,190 740,190 718,220 L262,950 L228,950 C215,1000 280,1058 330,1058 C365,1058 395,1040 405,1020 L420,1010 L798,400 C820,370 865,370 884,402 L918,410 C918,430 905,455 888,465 L520,1075 L485,1075 C480,1130 540,1195 590,1195 C625,1195 665,1175 680,1152 L695,1140 L1060,530 C1080,500 1145,500 1162,530 L1192,540 C1192,565 1180,585 1165,595 L795,1205 L762,1205 C760,1260 830,1315 870,1315 C905,1315 935,1295 945,1275 L960,1262 L1393,570 L1413,530 C1415,490 1390,470 1370,460 L1282,430 L1245,395 C1225,375 1225,350 1245,305"/>
          <path class="tl" d="M1032,205 L1012,258 L1170,345 C1185,352 1200,345 1225,302"/>
          <ellipse cx="805" cy="758" rx="36" ry="32" fill="#3f4e52"/>
          <path d="M780,775 C790,792 822,794 832,775 C818,765 795,765 780,775Z" fill="#eef8fb"/>
          <g fill="#39464a"><ellipse cx="758" cy="243" rx="10" ry="9"/><ellipse cx="1325" cy="511" rx="10" ry="9"/><ellipse cx="327" cy="967" rx="10" ry="9"/><ellipse cx="596" cy="1094" rx="10" ry="9"/><ellipse cx="864" cy="1221" rx="10" ry="9"/></g>
        </g>
        <g class="triad">
          <path d="M710 527V478" stroke="#1f3fc0" stroke-width="1.500"/><path d="M707 478l0-12 3 0 0 12 2 0-3.500-10-3.500 10z" fill="#1f3fc0"/>
          <path d="M710 527L750 464" stroke="#2b9a3a" stroke-width="1.500"/><path d="M747 470l12-14-5 18z" fill="#2b9a3a"/>
          <path d="M710 527L788 560" stroke="#d22a2a" stroke-width="1.500"/><path d="M783 551l15 12-18-3z" fill="#d22a2a"/>
          <path d="M709 515l0-10 3 4 0 6zM720 507l6-9 0 9-3 3zM731 532l7 1 2 5-8-3z" fill="#9a8f6a"/>
          <text x="709" y="464" class="lab blue">ZM</text>
          <text x="742" y="449" class="lab green">YM</text>
          <text x="785" y="579" class="lab red">XM</text>
          <text x="712" y="497" class="lab grey">Z</text>
          <text x="723" y="489" class="lab grey">Y</text>
          <text x="743" y="557" class="lab grey small">X</text>
        </g>
        <g class="mini">
          <path d="M610 664l12-6 9 5v12l-12 7-9-5z" fill="#bdbdbd"/><path d="M610 664l9 5v13l-9-5z" fill="#8a8a8a"/><path d="M619 669l12-6v12l-12 7z" fill="#a4a4a4"/>
          <path d="M605 676v-16" stroke="#2a3ac0"/><path d="M605 676l-2 3M605 678l9-22" stroke="#2a9a3a"/><path d="M607 677l27 11" stroke="#c22"/>
          <text x="600" y="657" class="lab blue small">Z</text><text x="618" y="653" class="lab green small">Y</text><text x="634" y="693" class="lab red small">X</text>
        </g>
        <g class="logo">
          <path d="M1105 624L1147 648V696L1105 720 1063 696V648Z" fill="#1d6f9a" stroke="#b9c0c4" stroke-width="2"/>
          <path d="M1105 624L1063 648V696L1090 712C1075 690 1075 670 1090 652 1100 640 1120 632 1135 640 1125 632 1115 628 1105 624Z" fill="#1c4f8a"/>
          <path d="M1105 640L1129 655V684L1105 698 1081 684V655Z" fill="none" stroke="#bfc6ca" stroke-width="4"/>
          <path d="M1085 658l20-11 20 11-20 11z" fill="#1d6f9a"/><path d="M1085 660l20 11v24l-20-11z" fill="#1c4f8a"/><path d="M1125 660l-20 11v24l20-11z" fill="#1f7fa8"/>
          <path d="M1085 658l20 11 20-11M1105 669v24" fill="none" stroke="#bfc6ca" stroke-width="1.200"/>
          <text x="1155" y="686" class="logotext">3D世界网</text>
          <text x="1157" y="701" class="logourl">WWW.3DSJW.COM</text>
        </g>
      </svg>
    </section>
  </main>

  <div class="dialog">
    <div class="dtitle"><button class="dclose">✕</button></div>
    <div class="dbody">
      <div class="dname"><span>名称</span><span class="eq">==</span></div>
      <div class="dinput"><i class="cursor"></i></div>
      <button class="dbtn"><span class="mono bl">Cycle </span>参数组<span class="mono bl"> - 1</span></button>
      <button class="dbtn">一般点</button>
      <button class="dbtn">组</button>
      <button class="dbtn">类选择</button>
      <button class="dbtn">面上所有孔</button>
      <button class="dbtn">预钻点</button>
      <button class="dbtn">最小直径<span class="mono bl"> - 5.0000</span></button>
      <button class="dbtn">最大直径<span class="mono bl"> - 5.0000</span></button>
      <button class="dbtn">选择结束</button>
      <button class="dbtn on">可选的<span class="mono bl"> - </span>全部</button>
      <div class="dfoot"><button class="fb ok">确定</button><button class="fb">后退</button><button class="fb">取消</button></div>
    </div>
    <div class="dbottom"></div>
  </div>

  <svg class="arrow" viewBox="0 0 1363 726" aria-hidden="true">
    <path d="M735 448L574 347" stroke="#d81e1e" stroke-width="2"/><path d="M563 340l17 1-6 10z" fill="#e01010"/>
  </svg>
  <svg class="badge" viewBox="0 0 44 12" aria-hidden="true"><path d="M0 0c6 6 22 7 32 2v-2z" fill="#4d5c2a" stroke="#fff" stroke-width="1.500"/><circle cx="33" cy="3" r="6" fill="#2dbb4e" stroke="#fff" stroke-width=".6"/><path d="M30 3l2 2 4-4" fill="none" stroke="#fff"/></svg>
  <div class="ime">
    <span class="imeq">Q</span><span class="imea">A</span><span class="imemoon">☽</span><span class="imedots">··</span>
    <svg class="imekb" viewBox="0 0 14 9"><rect width="14" height="9" rx="1" fill="#58687d"/><path d="M2 3h10M2 6h10" stroke="#dfe8f2" stroke-dasharray="1 1"/></svg>
    <svg class="imep" viewBox="0 0 10 12"><circle cx="5" cy="3" r="2.500" fill="#3a5a7a"/><path d="M0 12V7l3-1h4l3 1v5z" fill="#3a5a7a"/></svg>
    <svg class="imew" viewBox="0 0 12 12"><path d="M1 11l6-6c-1-3 2-5 4-4L9 3l1 1 1-2c1 3-1 5-3 5l-5 5z" fill="#2c4c70"/></svg>
  </div>
</div>
</body>
</html>
```
FILE: styles.css
```css
* { box-sizing: border-box; }
html, body { margin: 0; padding: 0; }
body { width: 1363px; height: 726px; overflow: hidden; background: #000; font: 12px "Noto Sans CJK SC", "Liberation Sans", sans-serif; color: #222; }
.sprite { position: absolute; width: 0; height: 0; }
.app { position: relative; width: 1363px; height: 726px; display: flex; flex-direction: column; overflow: hidden; }
button { font: inherit; margin: 0; padding: 0; }
i { display: block; font-style: normal; }

.title { height: 22px; flex: none; display: flex; align-items: center; background: linear-gradient(#8b8b8b 0, #6e6e6e 6px, #161616 8px, #101010 100%); color: #fff; }
.titleicon { width: 16px; height: 16px; margin: 2px 4px 0 4px; }
.titletext { font: 13px "Liberation Sans", "Noto Sans CJK SC", sans-serif; margin-top: 2px; color: #f2f2f2; letter-spacing: .25px; }
.brand { margin-left: auto; font: bold 12.5px "Liberation Sans", sans-serif; letter-spacing: .6px; margin-top: 2px; }
.wbtns { display: flex; gap: 4px; margin-left: 27px; align-self: flex-start; margin-right: -1px; margin-top: 1px; }
.wb { width: 18px; height: 18px; border: 1px solid #555; border-radius: 3px; background: linear-gradient(#666, #333); color: #fff; display: flex; align-items: center; justify-content: center; font-size: 12px; line-height: 1; }
.wclose { background: linear-gradient(#e88d70, #d44a2a); border-color: #a33; font-weight: bold; }
.wmin { width: 7px; height: 2px; background: #fff; margin-top: 6px; }
.wmax { width: 9px; height: 9px; border: 1px solid #fff; border-top-width: 2px; }

.menu { height: 24px; flex: none; display: flex; align-items: center; background: #e9e9e9; border-bottom: 1px solid #bdbdbd; padding-left: 4px; position: relative; }
.menugrip { height: 14px; margin: 0; }
.menulogo { width: 17px; height: 17px; margin-left: 1px; }
.mi { font-size: 12px; margin-right: 13px; white-space: nowrap; color: #222; padding-bottom: 2px; }
.mi.first { margin-left: 2px; }
.mi.cu { min-width: 103px; }
.k { font: 10px "Liberation Mono", monospace; white-space: pre; }
.innerbtns { margin-left: auto; display: flex; gap: 2px; margin-right: 2px; }
.ib { width: 17px; height: 16px; border: 1px solid #777; border-radius: 3px; background: linear-gradient(#f4f4f4, #dcdcdc); display: flex; align-items: center; justify-content: center; font-size: 10px; color: #bbb; }
.ib.dim { border-color: #ccc; font-weight: bold; }
.imin { width: 7px; height: 2px; background: #444; margin-top: 7px; }
.imax { width: 9px; height: 9px; border: 1px solid #444; border-top-width: 2px; }

.tb { flex: none; display: flex; align-items: center; padding-left: 4px; position: relative; }
.tb1 { height: 34px; background: linear-gradient(#e7e7e7, #d7d7d7); border-bottom: 1px solid #bfbfbf; }
.tb2 { height: 35px; background: linear-gradient(#d8d8d8, #c9c9c9); border-bottom: 2px solid #a8a8a8; padding-left: 0; }
.tb2main { display: flex; align-items: center; height: 100%; padding-left: 4px; width: 1075px; background: linear-gradient(#e7e7e7, #d8d8d8); border-right: 1px solid #f2f2f2; }
.i { width: 24px; height: 24px; margin: 0 3.5px; flex: none; }
.grip { width: 3px; height: 24px; margin: 0 2px 0 1px; flex: none; background: repeating-linear-gradient(#8d8d8d 0 1px, #f4f4f4 1px 2px, transparent 2px 4px); }
.gfirst { margin: 0; }
.sep { width: 2px; height: 30px; margin: 0 2px 0 0; flex: none; border-left: 1px solid #b9b9b9; border-right: 1px solid #fafafa; }
.tb2 .sep { margin: 0 .5px 0 3.5px; }
.dd { width: 9px; height: 24px; margin-right: 4px; flex: none; position: relative; }
.tb2 .dd { margin-right: 0; }
.dd::after { content: ""; position: absolute; left: 2px; bottom: 1px; border: 3px solid transparent; border-top: 4px solid #111; border-bottom: 0; }
.caret { width: 0; height: 0; border: 3px solid transparent; border-top: 4px solid #111; border-bottom: 0; flex: none; }
.startbtn { display: flex; align-items: center; width: 66.5px; margin-left: 4px; height: 30px; flex: none; }
.starticon { width: 24px; height: 24px; margin-right: 0; }
.startbtn .caret { margin-left: 4px; }
.finder { display: flex; align-items: center; width: 102px; margin-left: 4px; font-size: 12px; flex: none; }
.finder .i { margin: 0 3px 0 0; }
.tbmore { position: absolute; right: 0; top: 3px; width: 12px; display: flex; flex-direction: column; align-items: center; font-size: 13px; line-height: 14px; gap: 8px; }
.redt { font: bold 11px "Noto Sans CJK SC", sans-serif; fill: #d42020; }

.selbar { height: 27px; flex: none; display: flex; align-items: center; background: linear-gradient(#d9d9d9, #e3e3e3); border-bottom: 1px solid #f4f4f4; padding-left: 6px; position: relative; }
.combo { height: 16px; background: #fff; border: 1px solid #556; border-radius: 3px; display: flex; justify-content: space-between; align-items: center; flex: none; overflow: hidden; }
.c1 { width: 109px; margin-right: 9px; }
.c2 { width: 115px; margin-right: 7px; }
.ctext { padding-left: 1px; font-size: 12px; white-space: nowrap; }
.carrow { width: 17px; height: 14px; background: linear-gradient(#b9d4f4, #4488d8); position: relative; flex: none; }
.carrow::after { content: ""; position: absolute; left: 3px; top: 4px; border: 5px solid transparent; border-top: 6px solid #111; border-bottom: 0; }
.si { width: 18px; height: 18px; margin-right: 4px; flex: none; }
.selbar .sep { height: 22px; }
.funnel { width: 22px; height: 22px; margin: 0 0 0 4px; }
.selbar .caret { margin-right: 2px; }
.dashrect { width: 15px; height: 13px; border: 1px dashed #666; margin: 0 9px 0 5px; flex: none; }
.cubebtn { width: 23px; height: 23px; border: 1px solid #666; border-radius: 3px; background: #f8f8f8; display: flex; align-items: center; justify-content: center; margin: 0 3px 0 2px; }
.cubebtn .si { margin: 0; }
.selbar .selcaret { position: absolute; right: 4px; top: 16px; margin: 0; }

.cue { height: 22px; flex: none; display: flex; align-items: center; background: #e8e8e8; border-bottom: 2px solid #9a9a9a; padding-left: 3px; position: relative; }
.cuetext { font-weight: bold; font-size: 12px; }
.cuecell { position: absolute; top: 0; bottom: 0; border-left: 1px solid #fafafa; border-right: 1px solid #ccc; }
.c-a { left: 643px; } .c-b { left: 1288px; } .c-c { left: 1308px; }
.cueicon { position: absolute; left: 1350px; top: 5px; width: 11px; height: 11px; background: linear-gradient(#6aa3e8, #1f5fb8); border: 2px solid #444; }

.main { flex: 1; display: flex; min-height: 0; }
.tabs { width: 33px; flex: none; background: linear-gradient(90deg, #bcbcbc, #a0a0a0); border-right: 1px solid #777; padding-top: 18px; display: flex; flex-direction: column; gap: 2px; align-items: flex-end; }
.tab { width: 26px; height: 39px; background: linear-gradient(#e4e4e4, #cfcfcf); border: 1px solid #8d8d8d; border-right: 0; border-radius: 5px 0 0 5px; display: flex; align-items: center; justify-content: center; flex: none; }
.tab svg { width: 23px; height: 33px; }
.tab.active { width: 29px; height: 42px; background: #efefef; margin-right: -1px; }
.tab.gap { margin-top: 15px; }
.tab.gap2 { margin-top: 13px; }
.tab.gap3 { margin-top: 12px; }
.tab.t10 { margin-top: 2px; height: 38px; }
.tab.t11 { height: 18px; margin-top: 1px; align-items: flex-start; padding-top: 5px; border-bottom: 0; }
.tab.t11 svg { width: 14px; height: 12px; }
.tabscroll { align-self: center; display: flex; flex-direction: column; gap: 1px; margin-top: 2px; margin-left: 3px; }
.tabscroll span { width: 15px; height: 15px; background: #dcdcdc; border: 1px solid #bbb; position: relative; display: block; }
.tabscroll span::after { content: ""; position: absolute; left: 2px; top: 4px; border: 4.500px solid transparent; }
.tu::after { border-bottom: 5px solid #555 !important; border-top: 0 !important; }
.td::after { border-top: 5px solid #333 !important; border-bottom: 0 !important; }
.tabscroll .dimt::after { border-bottom-color: #bbb !important; }
.tabscroll .bar::before { content: ""; position: absolute; left: 2px; right: 2px; height: 1px; background: #555; }
.tu.bar::before { top: 2px; }
.td.bar::before { bottom: 2px; }

.panel { width: 522px; flex: none; background: #ededed; padding: 0 10px 0 10px; display: flex; flex-direction: column; border-right: 2px solid #222; }
.panelhead { height: 35px; flex: none; display: flex; align-items: center; font-weight: bold; font-size: 12px; padding-left: 5px; padding-top: 4px; }
.navi { width: 12px; height: 12px; margin-right: 12px; }
.tree { height: 465px; flex: none; border: 1px solid #8a8a8a; border-top: 0; background: #f0f0f0; display: flex; flex-direction: column; width: 502px; border-right-color: #aaa; }
.thead { height: 18px; flex: none; display: flex; background: linear-gradient(#f6f6f6, #cfcfcf); border-top: 1px solid #999; border-bottom: 1px solid #666; font-size: 12px; line-height: 15px; }
.th { padding-left: 6px; }
.th1 { width: 233px; border-right: 1px solid #777; }
.tbody { height: 429px; flex: none; display: flex; overflow: hidden; }
.tlines { width: 483px; flex: none; position: relative; background: #fff; }
.row { height: 20px; display: grid; grid-template-columns: 233px 62px 51px 46px 64px 27px; background: #fff; border-bottom: 1px solid #e6e6e6; }
.row.alt { background: #f5f7f7; }
.nm { display: flex; align-items: center; border-right: 1px solid #000; position: relative; overflow: visible; white-space: nowrap; height: 20px; }
.nm::before { content: ""; position: absolute; top: 0; height: 20px; border-left: 1px dotted #999; }
.n0 { padding-left: 4px; } .n0::before { left: 9px; }
.n1 { padding-left: 23px; } .n1::before { left: 9px; display: none; }
.n1::after, .n2::after { content: ""; position: absolute; left: 28px; top: 0; height: 20px; border-left: 1px dotted #999; }
.n2 { padding-left: 47px; } .n2::before { display: none; }
.nt { padding-left: 3px; }
.nt::before { display: none; }
.exp { width: 10px; height: 10px; border: 1px solid #8a8a8a; border-radius: 2px; background: linear-gradient(#fff, #ddd); position: relative; margin-right: 6px; flex: none; z-index: 1; }
.exp::after { content: ""; position: absolute; left: 1px; right: 1px; top: 3px; height: 1px; background: #333; }
.stub { width: 10px; margin: 0 6px 0 6px; border-top: 1px dotted #999; flex: none; }
.n0 .stub { margin-left: 6px; margin-right: 0; }
.n1 .stub.s1 { width: 12px; margin: 0 4px 0 0; }
.stub.s2 { width: 9px; margin: 0 1px 0 0; }
.st { width: 15px; height: 16px; flex: none; margin-right: 1px; }
span.st { display: block; }
.fo { width: 14px; height: 14px; flex: none; margin-right: 3px; }
.op { width: 18px; height: 16px; flex: none; margin-right: 1px; }
.mono { font: 10px "Liberation Mono", monospace; color: #1c6aa4; white-space: pre; }
.mono.dark { color: #3a3a3a; }
.nm > .mono { padding-top: 2px; }
.cjk { font-size: 12px; color: #333; padding-bottom: 2px; }
.g { border-right: 1px solid #dedede; padding-left: 3px; line-height: 20px; overflow: hidden; display: flex; align-items: center; height: 20px; }
.row .g:nth-child(3) { padding-left: 6px; }
.g.mono { padding-top: 2px; }
.tool { width: 10px; height: 16px; }
.row.sel { background: #fff; }
.nm > .seltext { background: #3c92ee; color: #fff; align-self: stretch; line-height: 18px; width: 143px; padding: 0 0 0 2px; border: 1px dotted #bcd6f0; margin-left: -3px; }
.row.sel .g { background: #3c92ee; color: #fff; border-right-color: #8abaf0; }
.sel .nm { border-right-color: #000; }
.vscroll { flex: 1; background: #efefef; position: relative; }
.vdown { position: absolute; left: 5px; bottom: 8px; border: 3px solid transparent; border-top: 4px solid #555; border-bottom: 0; }
.hscroll { height: 17px; flex: none; display: flex; align-items: center; background: #ececec; position: relative; }
.hl { width: 0; height: 0; border: 4px solid transparent; border-right: 4px solid #444; border-left: 0; margin-left: 7px; }
.thumb { margin-left: 7px; width: 385px; height: 16px; background: linear-gradient(#f2f2f2, #c2c2c2); border: 1px solid #aaa; border-radius: 3px; text-align: center; font: 8px/14px "Liberation Sans", sans-serif; color: #555; }
.hr { width: 0; height: 0; border: 4px solid transparent; border-left: 4px solid #444; border-right: 0; margin-left: 66px; }
.sash { height: 12px; flex: none; display: flex; align-items: center; gap: 4px; width: 502px; }
.sash i { flex: 1; height: 1px; background: #aaa; box-shadow: 0 1px #fff; }
.sash b { width: 96px; height: 5px; background: #c8c8c8; border: 1px solid #aaa; }
.acc { height: 23px; width: 502px; flex: none; display: flex; align-items: center; justify-content: space-between; background: linear-gradient(#f2f2f2 0, #f0f0f0 40%, #cfcfcf 42%, #dedede 100%); border-bottom: 1px solid #888; font-weight: bold; font-size: 12px; padding-left: 7px; }
.acc span { padding-bottom: 3px; }
.acc em { width: 22px; height: 22px; border-left: 1px solid #fff; display: flex; align-items: center; justify-content: center; font-style: normal; }
.chev { width: 14px; height: 10px; }

.view { flex: 1; background: #000; position: relative; }
.scene { position: absolute; inset: 0; width: 100%; height: 100%; }
.wh { fill: none; stroke: #f0fbff; stroke-width: 3px; vector-effect: non-scaling-stroke; }
.dk { fill: none; stroke: #46565c; stroke-width: 2.500px; vector-effect: non-scaling-stroke; }
.tl { fill: none; stroke: #28343a; stroke-width: .7px; vector-effect: non-scaling-stroke; }
.lab { font: 10px "Liberation Sans", sans-serif; }
.small { font-size: 8px; }
.blue { fill: #2f58d8; } .green { fill: #2c8f3c; } .red { fill: #c83a3a; } .grey { fill: #9a9a9a; }
.logotext { font: bold 45px "DejaVu Sans", "Noto Sans CJK SC", sans-serif; fill: #1f7fa5; stroke: #b9d6e2; stroke-width: .5px; }
.logourl { font: bold 14px "DejaVu Sans", sans-serif; letter-spacing: 3.800px; fill: #7f9fb2; }

.dialog { position: absolute; left: 318px; top: 151px; width: 333px; height: 378px; display: flex; flex-direction: column; border-radius: 6px 6px 5px 5px; overflow: hidden; background: #e6e6e6; z-index: 2; }
.dtitle { height: 24px; flex: none; background: linear-gradient(#777, #555 7px, #151515 9px, #111); position: relative; }
.dclose { position: absolute; right: 4px; top: 4px; width: 17px; height: 17px; background: linear-gradient(#e88d70, #d44a2a); border: 1px solid #bbb; border-radius: 2px; color: #fff; font-size: 12px; font-weight: bold; line-height: 1; }
.dbody { flex: 1; padding: 6px 11px 0; display: flex; flex-direction: column; gap: 4px; min-height: 0; }
.dname { height: 18px; flex: none; font-size: 12px; display: flex; gap: 17px; align-items: center; margin-bottom: 2px; margin-left: -1px; }
.eq { font: 10px "Liberation Mono", monospace; }
.dinput { height: 16px; flex: none; background: #fff; border: 1px solid #777; border-radius: 3px; padding: 1px 2px; }
.cursor { width: 1px; height: 12px; background: #222; }
.dbtn { height: 22px; flex: none; border: 1px solid #6f6f6f; border-radius: 4px; background: linear-gradient(#f0f0f0 0, #e0e0e0 25%, #bcbcbc 50%, #dcdcdc 70%, #f2f2f2 100%); font-size: 12px; color: #222; line-height: 18px; text-align: center; }
.dbtn.on { background: linear-gradient(#c8ecff 0, #78c8f4 35%, #3da4e8 55%, #78d0f8 100%); border-color: #47708c; }
.mono.bl { color: #222; }
.dfoot { flex: none; display: flex; justify-content: flex-end; gap: 7px; border-top: 1px solid #c8c8c8; margin: 6px -4px 0; padding: 5px 10px 0 0; }
.fb { width: 52px; height: 18px; border: 1px solid #666; border-radius: 4px; background: linear-gradient(#f8f8f8, #e4e4e4); font-size: 12px; line-height: 14px; color: #222; }
.fb.ok { background: linear-gradient(#c8f0b4, #7fd26a 50%, #a4e48e); border-color: #4d8a4a; }
.dbottom { height: 7px; flex: none; background: linear-gradient(#000, #333); }

.arrow { position: absolute; inset: 0; width: 1363px; height: 726px; z-index: 3; pointer-events: none; }
.badge { position: absolute; left: 1050px; top: 0; width: 44px; height: 12px; }
.ime { position: absolute; left: 1212px; top: 695px; width: 151px; height: 24px; background: linear-gradient(#eef5fc, #d6e4f4); border: 1px solid #a9c2e0; border-right: 0; border-radius: 3px 0 0 3px; display: flex; align-items: center; gap: 8px; padding-left: 8px; color: #2c4c70; z-index: 3; }
.imeq { font: bold 9px "Liberation Sans", sans-serif; border: 1px solid #2c4c70; width: 13px; height: 15px; line-height: 13px; text-align: center; background: #e8f0fa; }
.imea { font: 14px "Liberation Serif", serif; }
.imemoon { font: bold 12px "DejaVu Sans", sans-serif; }
.imedots { font-size: 10px; color: #99a; }
.imekb { width: 14px; height: 9px; }
.imep { width: 10px; height: 12px; }
.imew { width: 12px; height: 12px; }
```
